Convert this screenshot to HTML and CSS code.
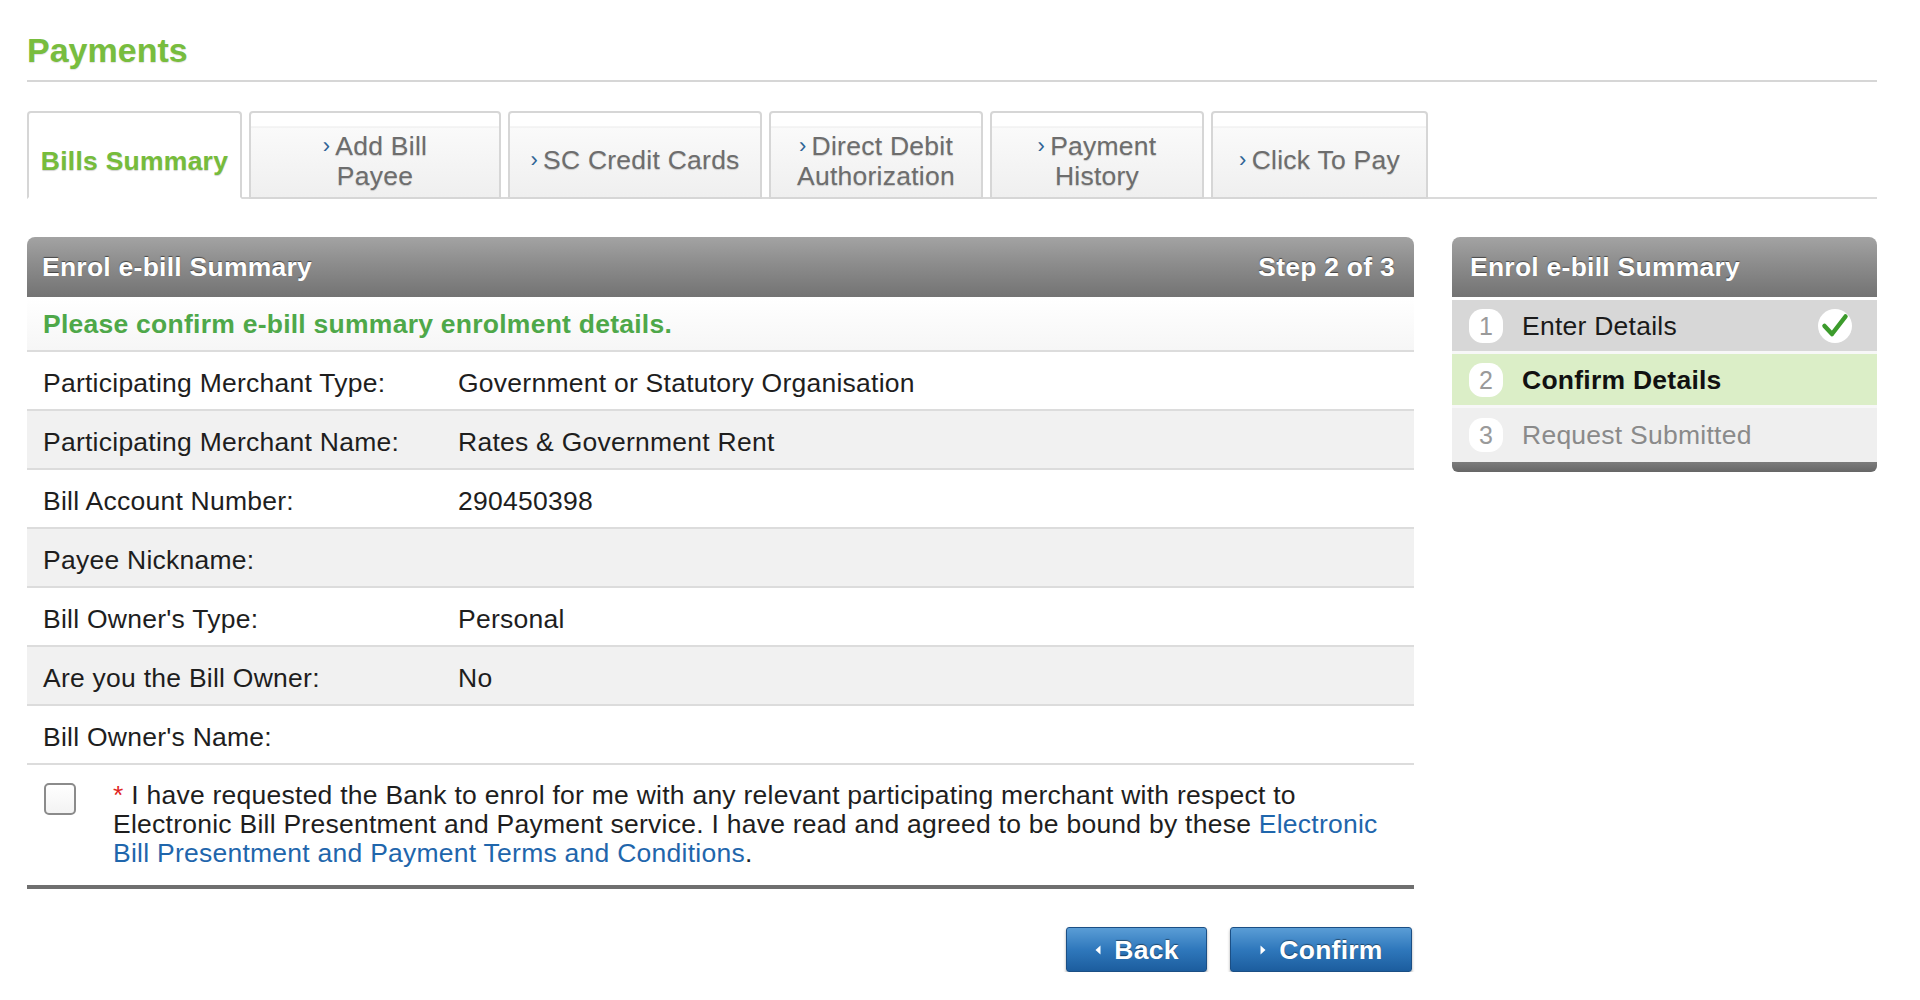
FILE: index.html
```html
<!DOCTYPE html>
<html lang="en">
<head>
<meta charset="utf-8">
<title>Payments</title>
<link rel="stylesheet" href="styles.css">
</head>
<body>
<div class="page">
  <h1 class="title">Payments</h1>
  <div class="rule"></div>

  <nav class="tabs">
    <div class="tab tab-active tab-w1"><span>Bills Summary</span></div>
    <div class="tab tab-w2"><span><i class="chev">›</i>Add Bill<br>Payee</span></div>
    <div class="tab tab-w3"><span><i class="chev">›</i>SC Credit Cards</span></div>
    <div class="tab tab-w4"><span><i class="chev">›</i>Direct Debit<br>Authorization</span></div>
    <div class="tab tab-w5"><span><i class="chev">›</i>Payment<br>History</span></div>
    <div class="tab tab-w6"><span><i class="chev">›</i>Click To Pay</span></div>
  </nav>

  <div class="content">
    <section class="main">
      <div class="panel-head">
        <span>Enrol e-bill Summary</span>
        <span>Step 2 of 3</span>
      </div>
      <div class="notice">Please confirm e-bill summary enrolment details.</div>

      <div class="row"><div class="label">Participating Merchant Type:</div><div class="value">Government or Statutory Organisation</div></div>
      <div class="row row-alt"><div class="label">Participating Merchant Name:</div><div class="value">Rates &amp; Government Rent</div></div>
      <div class="row"><div class="label">Bill Account Number:</div><div class="value">290450398</div></div>
      <div class="row row-alt"><div class="label">Payee Nickname:</div><div class="value"></div></div>
      <div class="row"><div class="label">Bill Owner's Type:</div><div class="value">Personal</div></div>
      <div class="row row-alt"><div class="label">Are you the Bill Owner:</div><div class="value">No</div></div>
      <div class="row"><div class="label">Bill Owner's Name:</div><div class="value"></div></div>

      <div class="agree">
        <span class="checkbox"></span>
        <p class="agree-text"><span class="req">*</span> I have requested the Bank to enrol for me with any relevant participating merchant with respect to<br>Electronic Bill Presentment and Payment service. I have read and agreed to be bound by these <a class="link" href="#">Electronic<br>Bill Presentment and Payment Terms and Conditions</a>.</p>
      </div>

      <div class="actions">
        <button class="btn btn-back" type="button">
          <svg class="btn-ico" width="8" height="12" viewBox="0 0 8 12"><path d="M6.5 1.5 L1.5 6 L6.5 10.5 Z" fill="#fff"/></svg>
          Back
        </button>
        <button class="btn btn-confirm" type="button">
          <svg class="btn-ico" width="8" height="12" viewBox="0 0 8 12"><path d="M1.5 1.5 L6.5 6 L1.5 10.5 Z" fill="#fff"/></svg>
          Confirm
        </button>
      </div>
    </section>

    <aside class="side">
      <div class="panel-head"><span>Enrol e-bill Summary</span></div>
      <div class="steps">
        <div class="step step-done">
          <span class="badge">1</span>
          <span class="step-text">Enter Details</span>
          <span class="tick">
            <svg width="34" height="34" viewBox="0 0 34 34"><circle cx="17" cy="17" r="17" fill="#fff"/><path d="M6.5 17 L14 25 L27.5 7.5" fill="none" stroke="#3c9b2c" stroke-width="4.5" stroke-linecap="round" stroke-linejoin="round"/></svg>
          </span>
        </div>
        <div class="step step-current">
          <span class="badge">2</span>
          <span class="step-text">Confirm Details</span>
        </div>
        <div class="step step-pending">
          <span class="badge">3</span>
          <span class="step-text">Request Submitted</span>
        </div>
      </div>
      <div class="steps-foot"></div>
    </aside>
  </div>
</div>
</body>
</html>
```

FILE: styles.css
```css
html, body {
  margin: 0;
  padding: 0;
  background: #fff;
}

body {
  font-family: "Liberation Sans", Arial, Helvetica, sans-serif;
  color: #222;
  font-size: 26.5px;
  letter-spacing: 0.25px;
}

.page {
  padding: 30px 43px 0 27px;
}

.title {
  margin: 0;
  font-size: 34px;
  line-height: 40px;
  font-weight: bold;
  letter-spacing: 0;
  color: #78bd3e;
  text-shadow: 0 1px 1px rgba(0, 0, 0, 0.12);
}

.rule {
  margin-top: 10px;
  height: 2px;
  background: #d6d6d6;
}

/* Tabs */
.tabs {
  display: flex;
  gap: 7px;
  margin-top: 29px;
  height: 86px;
  border-bottom: 2px solid #dadada;
}

.tab {
  box-sizing: border-box;
  height: 88px;
  margin-bottom: -2px;
  padding-top: 12px;
  border: 2px solid #d6d6d6;
  border-radius: 4px 4px 0 0;
  background: linear-gradient(#ffffff 0, #ffffff 13px, #ebebeb 14px, #fafafa 15px, #efefef 100%);
  display: flex;
  align-items: center;
  justify-content: center;
  text-align: center;
  font-size: 26.5px;
  line-height: 29px;
  color: #6d6d6d;
  text-shadow: 0 1px 1px rgba(0, 0, 0, 0.18);
}

.tab-active {
  background: #fff;
  border-bottom-color: #fff;
  color: #76bc3b;
  font-weight: bold;
}

.tab-w1 { width: 215px; }
.tab-w2 { width: 252px; }
.tab-w3 { width: 254px; }
.tab-w4 { width: 214px; }
.tab-w5 { width: 214px; }
.tab-w6 { width: 217px; }

.chev {
  font-style: normal;
  color: #2f6496;
  font-size: 22px;
  margin-right: 5px;
  position: relative;
  top: -2px;
  text-shadow: none;
}

/* Content */
.content {
  display: flex;
  gap: 38px;
  margin-top: 38px;
  align-items: flex-start;
}

.main {
  flex: 0 0 1387px;
}

.side {
  flex: 0 0 425px;
}

.panel-head {
  box-sizing: border-box;
  height: 60px;
  padding: 0 19px 0 15px;
  border-radius: 8px 8px 0 0;
  background: linear-gradient(#a3a3a3 0%, #8c8c8c 45%, #737373 100%);
  display: flex;
  align-items: center;
  justify-content: space-between;
  color: #fff;
  font-weight: bold;
  font-size: 26.5px;
  line-height: 30px;
  text-shadow: 0 -1px 1px rgba(0, 0, 0, 0.5);
}

.side .panel-head {
  padding-left: 18px;
}

.notice {
  box-sizing: border-box;
  height: 55px;
  padding-left: 16px;
  border-bottom: 2px solid #dcdcdc;
  background: linear-gradient(#ffffff, #f6f6f6);
  display: flex;
  align-items: center;
  color: #4ea849;
  font-weight: bold;
  line-height: 30px;
}

.row {
  box-sizing: border-box;
  height: 59px;
  padding-top: 4px;
  border-bottom: 2px solid #dcdcdc;
  display: flex;
  align-items: center;
  line-height: 30px;
  color: #1e1e1e;
}

.row-alt {
  background: #f1f1f1;
}

.label {
  width: 415px;
  padding-left: 16px;
  flex: 0 0 auto;
}

.value {
  flex: 1 1 auto;
}

/* Agreement */
.agree {
  display: flex;
  align-items: flex-start;
  padding: 18px 17px 17px 17px;
  border-bottom: 4px solid #6f6f6f;
}

.checkbox {
  flex: 0 0 auto;
  box-sizing: border-box;
  width: 32px;
  height: 32px;
  border: 2px solid #8b8b8b;
  border-radius: 5px;
  background: linear-gradient(#ffffff, #f3f3f3);
}

.agree-text {
  margin: -2px 0 0 37px;
  line-height: 29px;
  white-space: nowrap;
  color: #1e1e1e;
}

.req {
  color: #e0261f;
}

.link {
  color: #1f66ac;
  text-decoration: none;
}

/* Buttons */
.actions {
  display: flex;
  justify-content: flex-end;
  gap: 23px;
  margin-top: 38px;
  padding-right: 2px;
}

.btn {
  box-sizing: border-box;
  height: 45px;
  border: 1px solid #1b4f85;
  border-radius: 3px;
  background: linear-gradient(#5a9dd6 0%, #2f78bc 50%, #1c5d9e 100%);
  box-shadow: 0 2px 3px rgba(0, 0, 0, 0.35);
  color: #fff;
  font-family: "Liberation Sans", Arial, sans-serif;
  font-weight: bold;
  font-size: 26.5px;
  letter-spacing: 0.25px;
  line-height: 30px;
  text-shadow: 0 -1px 1px rgba(0, 0, 0, 0.45);
  display: flex;
  align-items: center;
  justify-content: center;
  padding: 0;
}

.btn-back { width: 141px; }
.btn-confirm { width: 182px; }

.btn-ico {
  margin-right: 12px;
}

/* Steps */
.steps {
  background: #f7f7f7;
}

.step {
  box-sizing: border-box;
  height: 51px;
  margin-top: 3px;
  padding: 0 25px 0 17px;
  display: flex;
  align-items: center;
  line-height: 30px;
}

.step-done {
  background: #d7d7d7;
  color: #1a1a1a;
}

.step-current {
  background: #dbeec7;
  color: #111;
  font-weight: bold;
}

.step-pending {
  height: 54px;
  background: #efefef;
  color: #8a8a8a;
}

.badge {
  flex: 0 0 auto;
  width: 34px;
  height: 34px;
  border-radius: 40%;
  background: #fff;
  color: #9a9a9a;
  font-size: 25px;
  font-weight: normal;
  letter-spacing: 0;
  line-height: 34px;
  text-align: center;
  margin-right: 19px;
}

.step-text {
  flex: 1 1 auto;
}

.tick {
  flex: 0 0 auto;
  width: 34px;
  height: 34px;
}

.tick svg {
  display: block;
}

.steps-foot {
  height: 10px;
  background: linear-gradient(#7c7c7c, #666);
  border-radius: 0 0 6px 6px;
}
```
